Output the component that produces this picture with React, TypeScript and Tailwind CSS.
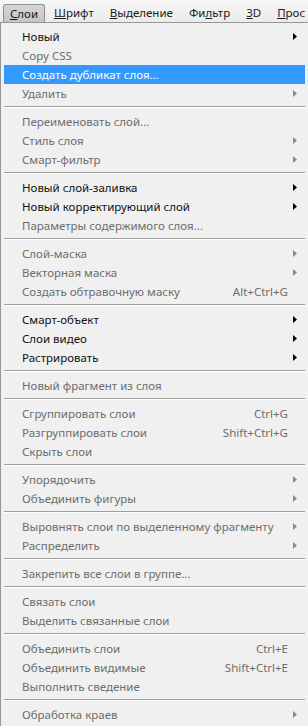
type Item =
  | { sep: true }
  | { label: string; off?: boolean; sub?: boolean; key?: string; hot?: boolean; sep?: false };

const items: Item[] = [
  { label: "Новый", sub: true },
  { label: "Copy CSS", off: true },
  { label: "Создать дубликат слоя...", hot: true },
  { label: "Удалить", off: true, sub: true },
  { sep: true },
  { label: "Переименовать слой...", off: true },
  { label: "Стиль слоя", off: true, sub: true },
  { label: "Смарт-фильтр", off: true, sub: true },
  { sep: true },
  { label: "Новый слой-заливка", sub: true },
  { label: "Новый корректирующий слой", sub: true },
  { label: "Параметры содержимого слоя...", off: true },
  { sep: true },
  { label: "Слой-маска", off: true, sub: true },
  { label: "Векторная маска", off: true, sub: true },
  { label: "Создать обтравочную маску", off: true, key: "Alt+Ctrl+G" },
  { sep: true },
  { label: "Смарт-объект", sub: true },
  { label: "Слои видео", sub: true },
  { label: "Растрировать", sub: true },
  { sep: true },
  { label: "Новый фрагмент из слоя", off: true },
  { sep: true },
  { label: "Сгруппировать слои", off: true, key: "Ctrl+G" },
  { label: "Разгруппировать слои", off: true, key: "Shift+Ctrl+G" },
  { label: "Скрыть слои", off: true },
  { sep: true },
  { label: "Упорядочить", off: true, sub: true },
  { label: "Объединить фигуры", off: true, sub: true },
  { sep: true },
  { label: "Выровнять слои по выделенному фрагменту", off: true, sub: true },
  { label: "Распределить", off: true, sub: true },
  { sep: true },
  { label: "Закрепить все слои в группе...", off: true },
  { sep: true },
  { label: "Связать слои", off: true },
  { label: "Выделить связанные слои", off: true },
  { sep: true },
  { label: "Объединить слои", off: true, key: "Ctrl+E" },
  { label: "Объединить видимые", off: true, key: "Shift+Ctrl+E" },
  { label: "Выполнить сведение", off: true },
  { sep: true },
  { label: "Обработка краев", off: true, sub: true },
];

function Arrow({ off }: { off?: boolean }) {
  return (
    <svg width="4" height="7" viewBox="0 0 4 7" className={off ? "text-[#8a8a8a]" : "text-black"}>
      <path d="M0 0 L4 3.5 L0 7 Z" fill="currentColor" />
    </svg>
  );
}

export default function App() {
  return (
    <div className="w-[308px] h-[726px] overflow-hidden bg-[#f0f0f0] text-[11.5px] font-['Noto_Sans','Open_Sans',sans-serif]">
      <div className="flex items-end h-[22px] overflow-hidden bg-gradient-to-b from-[#f7f7f7] to-[#ebebeb] text-[#1a1a1a]">
        <div className="shrink-0 ml-[3px] h-[18px] w-[42px] flex items-center justify-center rounded-t-[3px] border border-b-0 border-[#8e8e8e] bg-gradient-to-b from-[#d6d6d6] to-[#c4c4c4]">
          <span><u>С</u>лои</span>
        </div>
        <div className="shrink-0 h-[18px] flex items-center gap-[16px] pl-[9px] whitespace-nowrap">
          <span><u>Ш</u>рифт</span>
          <span><u>В</u>ыделение</span>
          <span>Фи<u>л</u>ьтр</span>
          <span><u>3</u>D</span>
          <span><u>П</u>рос</span>
        </div>
      </div>
      <div className="h-[704px] border-l border-t border-[#979797] bg-[#f0f0f0] pt-[4px] px-[3px]">
        {items.map((it, i) =>
          "label" in it ? (
            <div
              key={i}
              className={`flex items-center h-[19px] pl-[18px] pr-[8px] ${it.hot ? "bg-[#3399ff] text-white" : it.off ? "text-[#6d6d6d]" : "text-[#111]"}`}
            >
              <span className="flex-1 whitespace-nowrap">{it.label}</span>
              {it.key && <span className="mr-[9px] whitespace-nowrap">{it.key}</span>}
              {it.sub && <Arrow off={it.off} />}
            </div>
          ) : (
            <div key={i} className="pt-[3px] pb-[4px]">
              <div className="border-t border-b border-t-[#a0a0a0] border-b-white" />
            </div>
          )
        )}
      </div>
    </div>
  );
}
